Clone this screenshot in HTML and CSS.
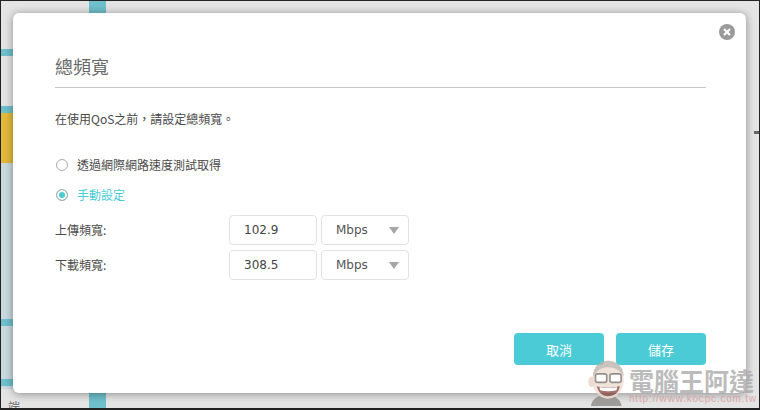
FILE: index.html
```html
<!DOCTYPE html>
<html lang="zh-Hant">
  <head>
    <title>總頻寬</title>
    <meta charset="utf-8" />
    <link rel="stylesheet" href="styles.css">
  </head>
  <body>
    <div class="backdrop">
      <span class="stripe stripe-top"></span>
      <span class="stripe stripe-bottom"></span>
      <span class="band band-a"></span>
      <span class="band band-b"></span>
      <span class="band band-yellow"></span>
      <span class="band band-pale"></span>
      <span class="band band-c"></span>
      <span class="band band-d"></span>
      <span class="tick"></span>
      <span class="cut-text">端</span>
    </div>

    <section class="modal">
      <button class="close" aria-label="關閉">
        <svg width="16" height="16" viewBox="0 0 16 16">
          <circle cx="8" cy="8" r="8" fill="#9a9a9a" />
          <path d="M5 5l6 6M11 5l-6 6" stroke="#fff" stroke-width="2.2" />
        </svg>
      </button>
      <h1 class="title">總頻寬</h1>
      <p class="intro">在使用QoS之前，請設定總頻寬。</p>

      <label class="radio">
        <span class="dot"></span>
        透過網際網路速度測試取得
      </label>
      <label class="radio radio-on">
        <span class="dot"></span>
        手動設定
      </label>

      <div class="field">
        <span class="field-label">上傳頻寬:</span>
        <div class="box box-input">102.9</div>
        <div class="box box-select">Mbps<i class="caret"></i></div>
      </div>
      <div class="field">
        <span class="field-label">下載頻寬:</span>
        <div class="box box-input">308.5</div>
        <div class="box box-select">Mbps<i class="caret"></i></div>
      </div>

      <div class="actions">
        <button class="btn">取消</button>
        <button class="btn">儲存</button>
      </div>
    </section>

    <div class="watermark">
      <svg class="face" width="42" height="46" viewBox="0 0 64 70">
        <path d="M6 70c2-12 12-17 23-17s21 5 24 17z" fill="#8b8783" />
        <ellipse cx="32" cy="30" rx="24" ry="29" fill="#ecdccf" />
        <path d="M9 26C9 9 20 1 32 1s24 8 24 24c-5-9-13-14-24-14S14 17 9 26z" fill="#bdb3ac" />
        <ellipse cx="7" cy="33" rx="5" ry="8" fill="#e6d2c5" />
        <rect x="13" y="21" width="17" height="13" rx="3" fill="#fff" stroke="#77726e" stroke-width="2.5" />
        <rect x="35" y="21" width="17" height="13" rx="3" fill="#fff" stroke="#77726e" stroke-width="2.5" />
        <path d="M15 40c8 3 26 3 35-1-1 11-9 16-18 16s-15-6-17-15z" fill="#8a4a44" />
        <path d="M19 41c7 2 20 2 27 0l-1 5c-8 2-17 2-25 0z" fill="#fff" />
      </svg>
      <div class="mark-text">
        <div class="mark-name">電腦王阿達</div>
        <div class="mark-url">http://www.kocpc.com.tw</div>
      </div>
    </div>
  </body>
</html>
```

FILE: styles.css
```css
html {
  height: 100%;
}

body {
  font-family: "Noto Sans CJK TC", "Liberation Sans", sans-serif;
  margin: 0;
  height: 410px;
  overflow: hidden;
  position: relative;
  color: #4a4a4a;
}

.backdrop {
  position: absolute;
  top: 0;
  left: 0;
  width: 760px;
  height: 410px;
  box-sizing: border-box;
  background: #e4e4e4;
  border: 1px solid #222;
  border-width: 1px 1px 2px 1px;
  overflow: hidden;
}

.stripe {
  position: absolute;
  left: 88px;
  width: 17px;
  background: #6fbfcc;
}

.stripe-top {
  top: 0;
  height: 14px;
}

.stripe-bottom {
  top: 390px;
  height: 20px;
}

.band {
  position: absolute;
  left: 0;
  width: 12px;
}

.band-a {
  top: 48px;
  height: 7px;
  background: #6fbfcc;
}

.band-b {
  top: 105px;
  height: 7px;
  background: #6fbfcc;
}

.band-yellow {
  top: 112px;
  height: 50px;
  background: #e3b93c;
}

.band-pale {
  top: 162px;
  height: 226px;
  background: #c9d9de;
}

.band-c {
  top: 318px;
  height: 7px;
  background: #6fbfcc;
}

.band-d {
  top: 378px;
  height: 7px;
  background: #6fbfcc;
}

.tick {
  position: absolute;
  left: 753px;
  top: 130px;
  width: 6px;
  height: 3px;
  background: #666;
}

.cut-text {
  position: absolute;
  left: 7px;
  top: 398px;
  font-size: 12px;
  line-height: 16px;
  color: #666;
}

.modal {
  position: absolute;
  top: 13px;
  left: 13px;
  width: 733px;
  height: 380px;
  box-sizing: border-box;
  padding: 35px 40px 28px 42px;
  background: #fff;
  border-radius: 6px;
  box-shadow: 0 1px 9px rgba(0, 0, 0, 0.4);
  display: flex;
  flex-direction: column;
}

.close {
  position: absolute;
  top: 11px;
  right: 11px;
  width: 16px;
  height: 16px;
  padding: 0;
  border: 0;
  background: none;
  line-height: 0;
}

.title {
  margin: 0;
  padding: 2px 0 4px;
  font-size: 18px;
  font-weight: 400;
  line-height: 33px;
  color: #6a6a6a;
  border-bottom: 1px solid #c8c8c8;
}

.intro {
  margin: 22px 0 0;
  font-size: 12px;
  line-height: 18px;
}

.radio {
  display: flex;
  align-items: center;
  gap: 9px;
  margin-top: 12px;
  height: 18px;
  font-size: 12px;
  line-height: 18px;
}

.intro + .radio {
  margin-top: 28px;
}

.dot {
  box-sizing: border-box;
  width: 12px;
  height: 12px;
  margin-left: 1px;
  border: 1px solid #aaa;
  border-radius: 50%;
  background: #fff;
}

.radio-on {
  color: #4acbd6;
}

.radio-on .dot {
  background: #4acbd6;
  box-shadow: inset 0 0 0 2px #fff;
}

.field {
  display: flex;
  align-items: center;
  margin-top: 5px;
  font-size: 12px;
}

.radio + .field {
  margin-top: 11px;
}

.field-label {
  width: 174px;
  margin-top: -2px;
}

.box {
  box-sizing: border-box;
  height: 30px;
  width: 88px;
  border: 1px solid #e2e2e2;
  border-radius: 4px;
  font-family: "DejaVu Sans", sans-serif;
  font-size: 12px;
  line-height: 28px;
  color: #444;
}

.box-input {
  padding-left: 14px;
  font-size: 12px;
}

.box-select {
  position: relative;
  margin-left: 4px;
  padding-left: 14px;
  color: #555;
}

.caret {
  position: absolute;
  right: 9px;
  top: 11px;
  border-style: solid;
  border-width: 7px 5.5px 0;
  border-color: #a6a6a6 transparent transparent;
}

.actions {
  display: flex;
  justify-content: flex-end;
  gap: 12px;
  margin-top: auto;
}

.btn {
  width: 90px;
  height: 32px;
  padding: 0;
  border: 0;
  border-radius: 4px;
  background: #4acbd6;
  color: #fff;
  font-family: inherit;
  font-size: 13px;
}

.watermark {
  position: absolute;
  left: 587px;
  top: 360px;
  display: flex;
  align-items: flex-start;
  opacity: 0.78;
}

.mark-text {
  width: 127px;
  padding-top: 7px;
}

.mark-name {
  font-family: "Noto Sans CJK TC", sans-serif;
  font-size: 25px;
  font-weight: 700;
  line-height: 26px;
  color: #a9a9a9;
  white-space: nowrap;
}

.mark-url {
  font-family: "Liberation Sans", sans-serif;
  font-size: 10px;
  line-height: 11px;
  letter-spacing: 0.8px;
  color: #d99a9a;
  white-space: nowrap;
}
```
